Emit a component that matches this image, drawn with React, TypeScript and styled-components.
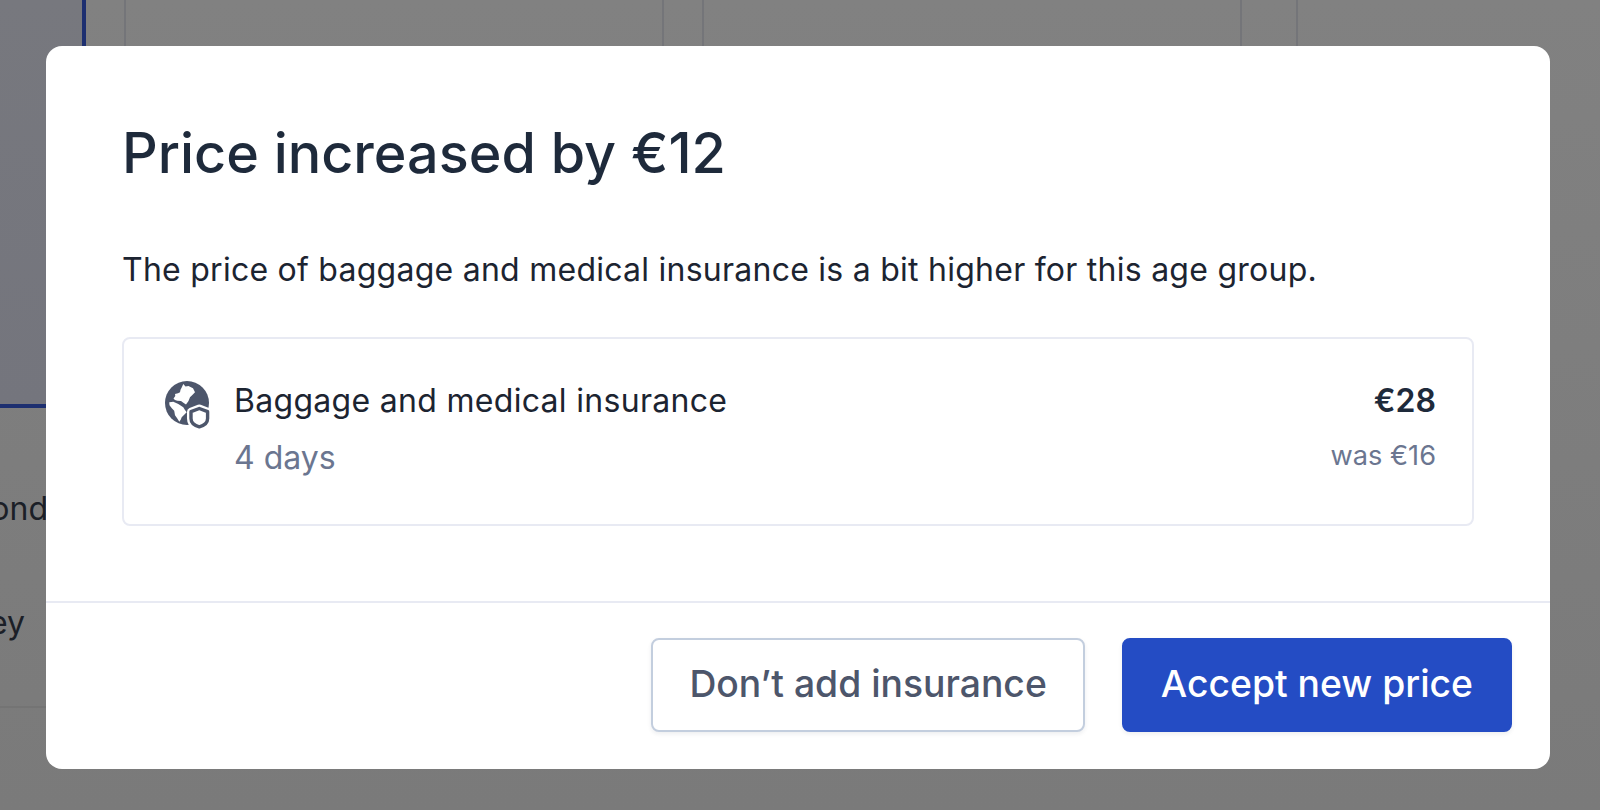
import React from 'react';
import styled, { createGlobalStyle } from 'styled-components';

const GlobalStyle = createGlobalStyle`
  html, body {
    margin: 0;
    height: 100%;
    overflow: hidden;
  }
  body {
    font-family: Inter, "Noto Sans", "Liberation Sans", sans-serif;
    -webkit-font-smoothing: antialiased;
  }
`;

const InsuranceIcon: React.FC = () => (
  <svg width="46" height="48" viewBox="0 0 46 48" aria-hidden="true">
    <circle cx="22" cy="22" r="22" fill="#4d566b" />
    <path
      fill="#fff"
      d="M18.300 3l2.200 2.500 3-.6 4.500 2.400 2 4-2.400 2.500-2.600 2.500-1.500 3.700-2.500 3.400-2.300-1.500-2.700-2-3.700-.2-2.300-.7-1.500-1.500 1.800-2.500L10 13l3-.8 2-.9.500-2.500 1.200-2.300 1.600-3.500ZM4.300 21.300l4-.6 5 2.300 5 3.300 1.500 2.500 1.900 2.500-2.500 2.500-2.500 2.500-1 2.500-1.400 2-2-3.200-2.300-3.400-.8-4.400-2.400-2.500-2.300-3.100-.2-1.900Z"
    />
    <path
      fill="#fff"
      stroke="#fff"
      strokeWidth="8"
      strokeLinejoin="round"
      d="M34.300 27.500l8.300 3.200v6.800c0 4-3.300 7-8.300 8.300-5-1.300-8.300-4.300-8.300-8.300v-6.800l8.300-3.200Z"
    />
    <path
      fill="#fff"
      stroke="#4d566b"
      strokeWidth="3.400"
      strokeLinejoin="round"
      d="M34.300 27.500l8.300 3.200v6.800c0 4-3.300 7-8.300 8.300-5-1.300-8.300-4.300-8.300-8.300v-6.800l8.300-3.200Z"
    />
  </svg>
);

const App: React.FC = () => (
  <>
    <GlobalStyle />
    <Page>
      <Columns>
        <SideColumn>
          <SidePanel />
          <SideRows>
            <SideText $inset={0}>ond</SideText>
            <SideText $inset={23}>ey</SideText>
          </SideRows>
        </SideColumn>
        <PlainColumn $width={40} />
        <PlainColumn $width={538} />
        <PlainColumn $width={40} />
        <PlainColumn $width={538} />
        <PlainColumn $width={56} />
      </Columns>
      <Overlay>
        <Modal>
          <Body>
            <Title>Price increased by €12</Title>
            <Message>
              The price of baggage and medical insurance is a bit higher for this age group.
            </Message>
            <Card>
              <IconSlot>
                <InsuranceIcon />
              </IconSlot>
              <CardText>
                <ItemName>Baggage and medical insurance</ItemName>
                <ItemMeta>4 days</ItemMeta>
              </CardText>
              <Prices>
                <NewPrice>€28</NewPrice>
                <OldPrice>was €16</OldPrice>
              </Prices>
            </Card>
          </Body>
          <Footer>
            <Button $primary={false}>Don’t add insurance</Button>
            <Button $primary>Accept new price</Button>
          </Footer>
        </Modal>
      </Overlay>
    </Page>
  </>
);

export default App;

const Page = styled.div`
  position: relative;
  width: 1600px;
  height: 810px;
  overflow: hidden;
  background: linear-gradient(180deg, #818181 0%, #7a7a7a 100%);
`;

const Columns = styled.div`
  display: flex;
  height: 100%;
`;

const SideColumn = styled.div`
  display: flex;
  flex-direction: column;
  width: 86px;
`;

const SidePanel = styled.div`
  height: 408px;
  flex-shrink: 0;
  box-sizing: border-box;
  background: linear-gradient(180deg, #77787e 0%, #74757d 100%);
  border-right: 4px solid #1d2f70;
  border-bottom: 4px solid #1d2f70;
`;

const SideRows = styled.div`
  display: flex;
  flex-direction: column;
  width: 48px;
  height: 300px;
  padding-top: 85px;
  box-sizing: border-box;
  gap: 82px;
  border-bottom: 2px solid #747474;
`;

const SideText = styled.div<{ $inset: number }>`
  display: flex;
  justify-content: flex-end;
  padding-right: ${(p) => p.$inset}px;
  font-size: 32px;
  line-height: 32px;
  color: #1b1f27;
  white-space: nowrap;
`;

const PlainColumn = styled.div<{ $width: number }>`
  box-sizing: border-box;
  width: ${(p) => p.$width}px;
  height: 46px;
  border-right: 2px solid #747579;
`;

const Overlay = styled.div`
  position: absolute;
  inset: 0;
  display: flex;
  align-items: flex-start;
  padding: 46px 50px 41px 46px;
`;

const Modal = styled.section`
  display: flex;
  flex-direction: column;
  width: 1504px;
  height: 723px;
  background: #fff;
  border-radius: 16px;
`;

const Body = styled.div`
  flex: 1;
  padding: 73px 76px 0;
`;

const Title = styled.h1`
  margin: 0;
  font-size: 55.7px;
  line-height: 68px;
  font-weight: 500;
  color: #1e2a3b;
`;

const Message = styled.p`
  margin: 63px 0 0;
  font-size: 32px;
  line-height: 40px;
  letter-spacing: 0.25px;
  color: #1c2431;
`;

const Card = styled.div`
  display: flex;
  align-items: flex-start;
  box-sizing: border-box;
  height: 189px;
  margin-top: 47px;
  padding: 40px 36px 0 41px;
  border: 2px solid #e8eaf3;
  border-radius: 8px;
`;

const IconSlot = styled.div`
  width: 46px;
  height: 48px;
  margin: 2px 23px 0 0;
`;

const CardText = styled.div`
  flex: 1;
`;

const ItemName = styled.div`
  font-size: 32px;
  line-height: 44px;
  letter-spacing: 0.3px;
  color: #1c2431;
`;

const ItemMeta = styled.div`
  margin-top: 13px;
  font-size: 32px;
  line-height: 44px;
  color: #6b7690;
`;

const Prices = styled.div`
  text-align: right;
`;

const NewPrice = styled.div`
  font-size: 32px;
  line-height: 44px;
  font-weight: 600;
  color: #1e2a3b;
`;

const OldPrice = styled.div`
  margin-top: 11px;
  font-size: 27.2px;
  line-height: 44px;
  color: #6b7690;
`;

const Footer = styled.footer`
  display: flex;
  justify-content: flex-end;
  gap: 37px;
  height: 168px;
  box-sizing: border-box;
  padding: 35px 38px 0;
  border-top: 2px solid #e8eaf3;
`;

const Button = styled.button<{ $primary: boolean }>`
  height: 94px;
  padding: 0 ${(p) => (p.$primary ? 37 : 36)}px 4px;
  font-family: inherit;
  font-size: 37.3px;
  font-weight: 500;
  border-radius: 8px;
  box-sizing: border-box;
  color: ${(p) => (p.$primary ? '#fff' : '#4d566b')};
  background: ${(p) => (p.$primary ? '#244cc4' : '#fff')};
  border: 2px solid ${(p) => (p.$primary ? '#244cc4' : '#c3cede')};
  box-shadow: 0 2px 4px rgba(30, 42, 59, 0.08);
`;
